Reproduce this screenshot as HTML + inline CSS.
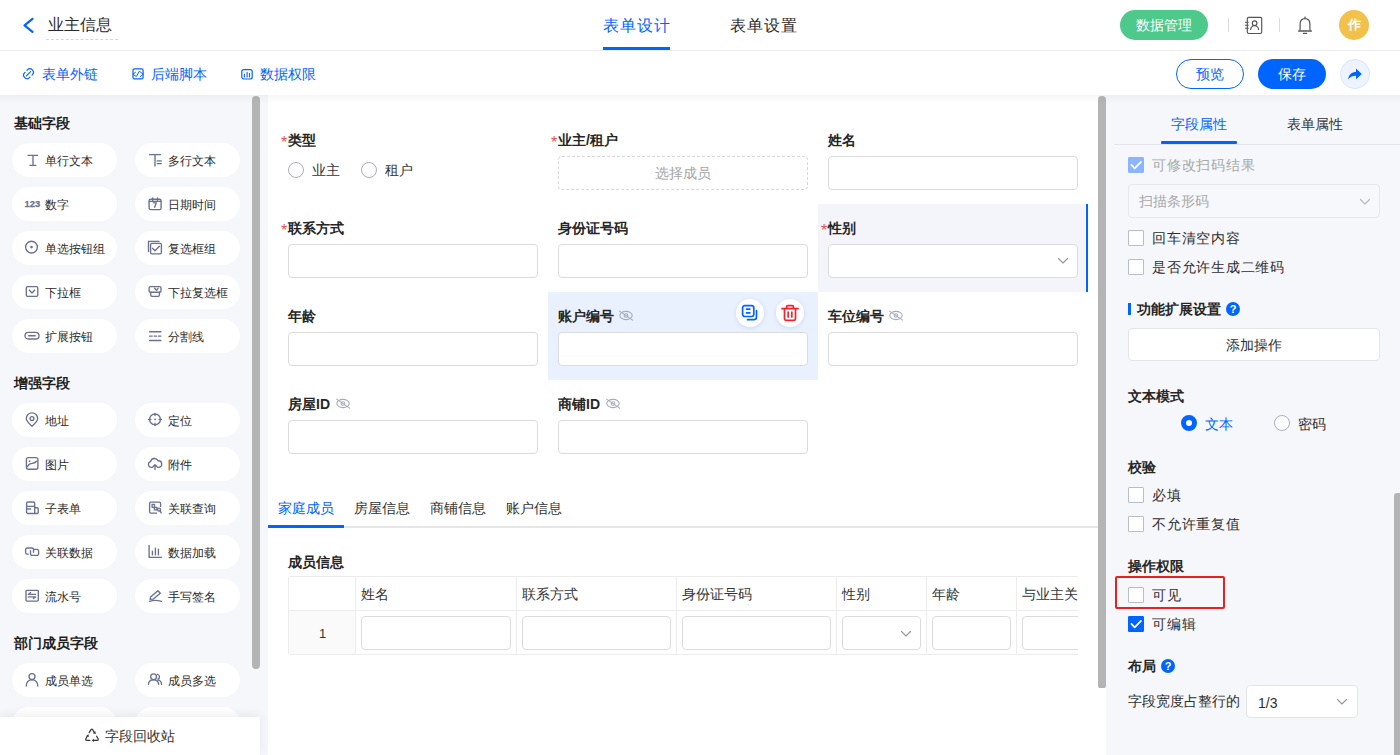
<!DOCTYPE html>
<html><head><meta charset="utf-8">
<style>
*{box-sizing:border-box;margin:0;padding:0}
html,body{width:1400px;height:755px;overflow:hidden}
body{position:relative;background:#f5f7fb;font-family:"Liberation Sans",sans-serif;color:#333;font-size:14px}
.a{position:absolute}
.t{position:absolute;white-space:nowrap;line-height:1}
svg{position:absolute;overflow:visible}
/* header */
#hdr{left:0;top:0;width:1400px;height:51px;background:#fff;border-bottom:1px solid #ececec}
#tb{left:0;top:51px;width:1400px;height:44px;background:#fff}
#tbsh{left:0;top:95px;width:1400px;height:9px;background:linear-gradient(rgba(0,0,0,0.035),rgba(0,0,0,0))}
.blue{color:#0064ff}
/* left panel */
#lp{left:0;top:95px;width:260px;height:660px}
.h{position:absolute;white-space:nowrap;left:14px;font-weight:bold;font-size:14px;color:#1f1f1f;line-height:1}
.pill{position:absolute;width:105px;height:34px;border-radius:17px;background:#fff}
.pill .t{left:33px;top:12px;font-size:12px;color:#2b2b2b}
.pill svg{left:12px;top:10px}
/* canvas */
#cv{left:268px;top:95px;width:830px;height:660px;background:#fff}
.lbl{position:absolute;font-weight:bold;font-size:14px;color:#262626;line-height:1}
.req{color:#ee4d4d;font-weight:normal;position:absolute;left:-7px;top:2px;font-size:16px}
.inp{position:absolute;width:250px;height:34px;border:1px solid #dcdcdc;border-radius:4px;background:#fff}
/* right panel */
#rp{left:1106px;top:95px;width:294px;height:660px}
.cb{position:absolute;width:16px;height:16px;border:1px solid #b8bccb;border-radius:1px;background:#fff}
.rt{position:absolute;white-space:nowrap;line-height:1;font-size:14px;color:#2e2e2e}
</style></head>
<body>

<!-- HEADER -->
<div id="hdr" class="a">
  <svg style="left:0;top:0" width="40" height="50"><polyline points="32.5,18.8 24.5,25.3 32.5,31.8" fill="none" stroke="#0064ff" stroke-width="2.2" stroke-linecap="round" stroke-linejoin="round"/></svg>
  <div class="t" style="left:48px;top:17px;font-size:16px;color:#2a2a2a">业主信息</div>
  <div class="a" style="left:46px;top:39px;width:72px;height:0;border-top:1px dashed #d6d6d6"></div>
  <div class="t blue" style="left:603px;top:18px;font-size:16px;letter-spacing:1px">表单设计</div>
  <div class="a" style="left:603px;top:47px;width:67px;height:3px;background:#0064ff"></div>
  <div class="t" style="left:730px;top:18px;font-size:16px;color:#2a2a2a;letter-spacing:1px">表单设置</div>
  <div class="a" style="left:1120px;top:10px;width:88px;height:30px;border-radius:15px;background:#4cc98b"></div>
  <div class="t" style="left:1136px;top:18px;font-size:14px;color:#fff">数据管理</div>
  <div class="a" style="left:1228px;top:18px;width:1px;height:14px;background:#dcdcdc"></div>
  <svg style="left:1244px;top:16px" width="20" height="20"><rect x="3.3" y="1.3" width="14.4" height="16.2" rx="1.4" fill="none" stroke="#555" stroke-width="1.15"/><circle cx="10.6" cy="7.2" r="2.3" fill="none" stroke="#555" stroke-width="1.15"/><path d="M6.6 14 A4 4.4 0 0 1 14.6 14" fill="none" stroke="#555" stroke-width="1.15"/><path d="M1 6.3h3.8M1 9.3h3.8M1 12.3h3.8" stroke="#555" stroke-width="1.1"/></svg>
  <div class="a" style="left:1279px;top:18px;width:1px;height:14px;background:#dcdcdc"></div>
  <svg style="left:1296px;top:15px" width="20" height="22"><path d="M3.8 15.6 Q4.1 14.8 4.1 13.5 V9.2 Q4.1 3.6 9 3.6 Q13.9 3.6 13.9 9.2 V13.5 Q13.9 14.8 14.2 15.6" fill="none" stroke="#555" stroke-width="1.2" stroke-linejoin="round"/><path d="M2.6 16 H15.4" stroke="#555" stroke-width="1.3" stroke-linecap="round"/><circle cx="9" cy="2.2" r="0.8" fill="#555"/><path d="M7.4 18.4 H10.6" stroke="#555" stroke-width="1.2" stroke-linecap="round"/></svg>
  <div class="a" style="left:1339px;top:10px;width:30px;height:30px;border-radius:15px;background:#f2c14b"></div>
  <div class="t" style="left:1348px;top:19px;font-size:12.5px;color:#fff;font-weight:bold">作</div>
</div>

<!-- TOOLBAR -->
<div id="tb" class="a">
  <svg style="left:22px;top:16px" width="14" height="14"><g transform="translate(6.5 6.75) rotate(45) scale(1.2)" fill="none" stroke="#0064ff" stroke-width="1" stroke-linecap="round"><path d="M-2.9 -1.2V-1.6A2.9 2.9 0 0 1 2.9 -1.6V-1.2M2.9 1.2V1.6A2.9 2.9 0 0 1 -2.9 1.6V1.2M0 -2.5V2.5"/></g></svg>
  <div class="t blue" style="left:42px;top:16px;font-size:14px">表单外链</div>
  <svg style="left:131px;top:17px" width="14" height="14"><rect x="2" y="0.8" width="10.1" height="10.1" rx="1.5" fill="none" stroke="#0064ff" stroke-width="1.2"/><path d="M4.5 4.3L1.8 6.2L5.4 8.5L8.3 3.2L12.3 6.2L9.3 8.5" fill="none" stroke="#0064ff" stroke-width="1" stroke-linejoin="round" stroke-linecap="round"/></svg>
  <div class="t blue" style="left:151px;top:16px;font-size:14px">后端脚本</div>
  <svg style="left:240px;top:17px" width="14" height="14"><rect x="1.8" y="1.7" width="10.4" height="9.3" rx="2" fill="none" stroke="#0064ff" stroke-width="1.2"/><path d="M4.4 6.2V8.9M7.1 4.3V8.9M9.5 5.3V8.9" stroke="#0064ff" stroke-width="1.1" stroke-linecap="round"/></svg>
  <div class="t blue" style="left:260px;top:16px;font-size:14px">数据权限</div>
  <div class="a" style="left:1176px;top:8px;width:68px;height:30px;border-radius:15px;border:1px solid #0064ff;background:#fff"></div>
  <div class="t blue" style="left:1196px;top:16px;font-size:14px">预览</div>
  <div class="a" style="left:1258px;top:8px;width:68px;height:30px;border-radius:15px;background:#0064ff"></div>
  <div class="t" style="left:1278px;top:16px;font-size:14px;color:#fff">保存</div>
  <div class="a" style="left:1340px;top:8px;width:30px;height:30px;border-radius:15px;background:#eef4ff;border:1px solid #d8e5ff"></div>
  <svg style="left:1347px;top:15px" width="16" height="16"><path d="M1.2 13.4 C1.8 8.4 5 6.1 9 6.1 V2.6 L14.8 8 L9 13.3 V9.7 C5.6 9.7 3.2 10.8 1.2 13.4 Z" fill="#0064ff"/></svg>
</div>

<!-- LEFT PANEL -->
<div class="a" style="left:0;top:0">
<div class="h" style="top:116px">基础字段</div>
<div class="pill" style="left:12px;top:143px"><svg width="20" height="20" style="left:10px;top:7px"><path d="M6.1 5.4H15.6M8 15.4H13.8M11 5.4V15.4" stroke="#69718f" stroke-width="1.35" fill="none" stroke-linecap="round" stroke-linejoin="round"/></svg><div class="t">单行文本</div></div>
<div class="pill" style="left:135px;top:143px"><svg width="20" height="20" style="left:10px;top:7px"><path d="M4.5 4.6H15.6M10 4.6V16M12.2 10.9H16.3M12.2 13.6H16.3" stroke="#69718f" stroke-width="1.35" fill="none" stroke-linecap="round" stroke-linejoin="round"/></svg><div class="t">多行文本</div></div>
<div class="pill" style="left:12px;top:187px"><svg width="20" height="20" style="left:10px;top:7px"><text x="2.6" y="13" style="font:bold 9.4px &quot;Liberation Sans&quot;" fill="#69718f" stroke="#69718f" stroke-width="0.25">123</text></svg><div class="t">数字</div></div>
<div class="pill" style="left:135px;top:187px"><svg width="20" height="20" style="left:10px;top:7px"><rect x="4.1" y="5.2" width="12" height="10.4" rx="1.6" stroke="#69718f" stroke-width="1.35" fill="none" stroke-linecap="round" stroke-linejoin="round"/><path d="M7.7 3.8V6.2M12.5 3.8V6.2M4.1 7.3H16.1M8.3 8.8H11.4L9.6 13.3" stroke="#69718f" stroke-width="1.35" fill="none" stroke-linecap="round" stroke-linejoin="round"/></svg><div class="t">日期时间</div></div>
<div class="pill" style="left:12px;top:231px"><svg width="20" height="20" style="left:10px;top:7px"><circle cx="9.5" cy="9.1" r="5.9" stroke="#69718f" stroke-width="1.35" fill="none" stroke-linecap="round" stroke-linejoin="round"/><circle cx="9.5" cy="9.1" r="1.3" fill="#69718f"/></svg><div class="t">单选按钮组</div></div>
<div class="pill" style="left:135px;top:231px"><svg width="20" height="20" style="left:10px;top:7px"><path d="M3.5 13.6V3.4H14" stroke="#69718f" stroke-width="1.35" fill="none" stroke-linecap="round" stroke-linejoin="round"/><rect x="5.6" y="5.4" width="10.8" height="10.4" rx="1.2" stroke="#69718f" stroke-width="1.35" fill="none" stroke-linecap="round" stroke-linejoin="round"/><path d="M7.5 10.3L10 12.8L14.4 8.2" stroke="#69718f" stroke-width="1.35" fill="none" stroke-linecap="round" stroke-linejoin="round"/></svg><div class="t">复选框组</div></div>
<div class="pill" style="left:12px;top:275px"><svg width="20" height="20" style="left:10px;top:7px"><rect x="4.3" y="4.6" width="11.5" height="9.7" rx="1.3" stroke="#69718f" stroke-width="1.35" fill="none" stroke-linecap="round" stroke-linejoin="round"/><path d="M7.4 8.3L10 10.9L12.6 8.3" stroke="#69718f" stroke-width="1.35" fill="none" stroke-linecap="round" stroke-linejoin="round"/></svg><div class="t">下拉框</div></div>
<div class="pill" style="left:135px;top:275px"><svg width="20" height="20" style="left:10px;top:7px"><rect x="4.1" y="4.6" width="11.9" height="5.6" rx="1.3" stroke="#69718f" stroke-width="1.35" fill="none" stroke-linecap="round" stroke-linejoin="round"/><path d="M5.7 10.2V13Q5.7 14.3 7 14.3H13.1Q14.4 14.3 14.4 13V10.2M9.6 6.3L11.6 8.3L13 6.3" stroke="#69718f" stroke-width="1.35" fill="none" stroke-linecap="round" stroke-linejoin="round"/></svg><div class="t">下拉复选框</div></div>
<div class="pill" style="left:12px;top:319px"><svg width="20" height="20" style="left:10px;top:7px"><rect x="3" y="6.4" width="14" height="6.6" rx="3.3" stroke="#69718f" stroke-width="1.35" fill="none" stroke-linecap="round" stroke-linejoin="round"/><path d="M6.7 9.7H13.3" stroke="#69718f" stroke-width="1.35" fill="none" stroke-linecap="round" stroke-linejoin="round"/></svg><div class="t">扩展按钮</div></div>
<div class="pill" style="left:135px;top:319px"><svg width="20" height="20" style="left:10px;top:7px"><path d="M4.6 5.7H15.9M4.6 14.5H15.9M4.6 10.1H7.2M9 10.1H11.5M13.3 10.1H15.9" stroke="#69718f" stroke-width="1.35" fill="none" stroke-linecap="round" stroke-linejoin="round"/></svg><div class="t">分割线</div></div>
<div class="h" style="top:376px">增强字段</div>
<div class="pill" style="left:12px;top:403px"><svg width="20" height="20" style="left:10px;top:7px"><path d="M10 16.2Q4.3 11.4 4.3 8.6A5.7 5.7 0 0 1 15.7 8.6Q15.7 11.4 10 16.2Z" stroke="#69718f" stroke-width="1.35" fill="none" stroke-linecap="round" stroke-linejoin="round"/><circle cx="10" cy="8.5" r="1.9" stroke="#69718f" stroke-width="1.35" fill="none" stroke-linecap="round" stroke-linejoin="round"/></svg><div class="t">地址</div></div>
<div class="pill" style="left:135px;top:403px"><svg width="20" height="20" style="left:10px;top:7px"><circle cx="10" cy="9.4" r="5.4" stroke="#69718f" stroke-width="1.35" fill="none" stroke-linecap="round" stroke-linejoin="round"/><path d="M10 3.3V5.6M10 13.2V15.6M3.6 9.4H5.9M14.1 9.4H16.4" stroke="#69718f" stroke-width="1.35" fill="none" stroke-linecap="round" stroke-linejoin="round"/><rect x="9.2" y="8.6" width="1.6" height="1.6" fill="#69718f"/></svg><div class="t">定位</div></div>
<div class="pill" style="left:12px;top:447px"><svg width="20" height="20" style="left:10px;top:7px"><rect x="4.4" y="3.6" width="11.5" height="11.6" rx="2" stroke="#69718f" stroke-width="1.35" fill="none" stroke-linecap="round" stroke-linejoin="round"/><path d="M5.6 12.6Q6.8 9.6 10 9.4Q13 9.1 14.6 7.2" stroke="#69718f" stroke-width="1.35" fill="none" stroke-linecap="round" stroke-linejoin="round"/><circle cx="7.6" cy="7.2" r="0.9" fill="#69718f"/></svg><div class="t">图片</div></div>
<div class="pill" style="left:135px;top:447px"><svg width="20" height="20" style="left:10px;top:7px"><path d="M7.6 13.3H6.2A2.9 2.9 0 0 1 5.6 7.6A3.9 3.9 0 0 1 13 6.8A3.2 3.2 0 0 1 13.8 13.3H12.4M10 15.6V11M8.1 12.6L10 10.7L11.9 12.6" stroke="#69718f" stroke-width="1.35" fill="none" stroke-linecap="round" stroke-linejoin="round"/></svg><div class="t">附件</div></div>
<div class="pill" style="left:12px;top:491px"><svg width="20" height="20" style="left:10px;top:7px"><path d="M12.7 15.5H6A1.4 1.4 0 0 1 4.6 14.1V5.4A1.4 1.4 0 0 1 6 4H11.3A1.4 1.4 0 0 1 12.7 5.4V15.5ZM4.6 8.3H12.7M5.8 11H8.6M12.7 9.7H15.2A1 1 0 0 1 16.2 10.7V14.5A1 1 0 0 1 15.2 15.5H12.7" stroke="#69718f" stroke-width="1.35" fill="none" stroke-linecap="round" stroke-linejoin="round"/></svg><div class="t">子表单</div></div>
<div class="pill" style="left:135px;top:491px"><svg width="20" height="20" style="left:10px;top:7px"><path d="M11.6 15.1H5.9A1.3 1.3 0 0 1 4.6 13.8V5.4A1.3 1.3 0 0 1 5.9 4.1H14.3A1.3 1.3 0 0 1 15.6 5.4V8.6" stroke="#69718f" stroke-width="1.35" fill="none" stroke-linecap="round" stroke-linejoin="round"/><rect x="7.1" y="6.3" width="2.4" height="3" stroke="#69718f" stroke-width="1.35" fill="none" stroke-linecap="round" stroke-linejoin="round"/><rect x="9.4" y="9.3" width="2.4" height="2.6" stroke="#69718f" stroke-width="1.35" fill="none" stroke-linecap="round" stroke-linejoin="round"/><circle cx="14" cy="11.6" r="1.5" stroke="#69718f" stroke-width="1.35" fill="none" stroke-linecap="round" stroke-linejoin="round"/><path d="M15.2 12.9L16.2 14.9" stroke="#69718f" stroke-width="1.35" fill="none" stroke-linecap="round" stroke-linejoin="round"/></svg><div class="t">关联查询</div></div>
<div class="pill" style="left:12px;top:535px"><svg width="20" height="20" style="left:10px;top:7px"><path d="M6.3 12.1H5.2A1.6 1.6 0 0 1 3.6 10.5V7.6A1.6 1.6 0 0 1 5.2 6H9.9A1.6 1.6 0 0 1 11.5 7.6V10.3M11.7 7.4H15A1.6 1.6 0 0 1 16.6 9V11.8A1.6 1.6 0 0 1 15 13.4H10.1A1.6 1.6 0 0 1 8.5 11.8V8.6" stroke="#69718f" stroke-width="1.35" fill="none" stroke-linecap="round" stroke-linejoin="round"/></svg><div class="t">关联数据</div></div>
<div class="pill" style="left:135px;top:535px"><svg width="20" height="20" style="left:10px;top:7px"><path d="M4.1 3.4V15.3H16.6M7.4 9.1V12.9M10.4 6.2V12.9M13.4 7.1V12.9" stroke="#69718f" stroke-width="1.35" fill="none" stroke-linecap="round" stroke-linejoin="round"/></svg><div class="t">数据加载</div></div>
<div class="pill" style="left:12px;top:579px"><svg width="20" height="20" style="left:10px;top:7px"><rect x="4" y="4.3" width="12.3" height="10.8" rx="0.8" stroke="#69718f" stroke-width="1.35" fill="none" stroke-linecap="round" stroke-linejoin="round"/><path d="M6.3 8.4H13.5M6.3 8.4L8.6 6.5M6.3 10.9H13.5M13.5 10.9L11.4 12.5" stroke="#69718f" stroke-width="1.35" fill="none" stroke-linecap="round" stroke-linejoin="round"/></svg><div class="t">流水号</div></div>
<div class="pill" style="left:135px;top:579px"><svg width="20" height="20" style="left:10px;top:7px"><path d="M5.2 13.4L5.6 10.9L12.9 4.7L15.3 7.3L8 13.2Z" stroke="#69718f" stroke-width="1.35" fill="none" stroke-linecap="round" stroke-linejoin="round"/><path d="M4.5 15.3Q10 13.4 16.4 15.3" stroke="#69718f" stroke-width="1.35" fill="none" stroke-linecap="round" stroke-linejoin="round"/></svg><div class="t">手写签名</div></div>
<div class="h" style="top:636px">部门成员字段</div>
<div class="pill" style="left:12px;top:663px"><svg width="20" height="20" style="left:10px;top:7px"><circle cx="10" cy="6.6" r="3" stroke="#69718f" stroke-width="1.35" fill="none" stroke-linecap="round" stroke-linejoin="round"/><path d="M4.3 16Q4.4 9.8 10 9.8Q15.6 9.8 15.8 16" stroke="#69718f" stroke-width="1.35" fill="none" stroke-linecap="round" stroke-linejoin="round"/></svg><div class="t">成员单选</div></div>
<div class="pill" style="left:135px;top:663px"><svg width="20" height="20" style="left:10px;top:7px"><circle cx="8.6" cy="6.8" r="2.9" stroke="#69718f" stroke-width="1.35" fill="none" stroke-linecap="round" stroke-linejoin="round"/><path d="M3.4 14.4Q3.6 9.8 8.6 9.8Q13.3 9.8 13.7 14.4M12.4 4.3A2.6 2.6 0 0 1 13 9.2M13 9.8Q16.3 10.6 16.6 14.4" stroke="#69718f" stroke-width="1.35" fill="none" stroke-linecap="round" stroke-linejoin="round"/></svg><div class="t">成员多选</div></div>
<div class="pill" style="left:12px;top:707px"><svg width="20" height="20" style="left:10px;top:7px"><circle cx="10" cy="6.6" r="3" stroke="#69718f" stroke-width="1.35" fill="none" stroke-linecap="round" stroke-linejoin="round"/><path d="M4.3 16Q4.4 9.8 10 9.8Q15.6 9.8 15.8 16" stroke="#69718f" stroke-width="1.35" fill="none" stroke-linecap="round" stroke-linejoin="round"/></svg><div class="t">部门单选</div></div>
<div class="pill" style="left:135px;top:707px"><svg width="20" height="20" style="left:10px;top:7px"><circle cx="8.6" cy="6.8" r="2.9" stroke="#69718f" stroke-width="1.35" fill="none" stroke-linecap="round" stroke-linejoin="round"/><path d="M3.4 14.4Q3.6 9.8 8.6 9.8Q13.3 9.8 13.7 14.4M12.4 4.3A2.6 2.6 0 0 1 13 9.2M13 9.8Q16.3 10.6 16.6 14.4" stroke="#69718f" stroke-width="1.35" fill="none" stroke-linecap="round" stroke-linejoin="round"/></svg><div class="t">部门多选</div></div>
</div>
<div class="a" style="left:252px;top:96px;width:8px;height:573px;border-radius:4px;background:#b4b4b4"></div>
<div class="a" style="left:0;top:717px;width:260px;height:38px;background:#fff;box-shadow:0 -2px 10px rgba(0,0,0,0.07)"></div>
<svg style="left:84px;top:727px" width="16" height="16"><path d="M5.2 5.6L7 2.6Q7.8 1.6 8.6 2.6L10 5M3.4 8.8L1.8 12Q1.3 13.3 2.8 13.3H5.9M12.6 9.2L14.2 12Q14.7 13.3 13.2 13.3H9" fill="none" stroke="#333" stroke-width="1.2" stroke-linecap="round" stroke-linejoin="round"/><path d="M8.8 6.2L11.9 6.9L11.2 3.9Z M2.2 9.3L4.8 9.9L4.5 6.9Z M8 13.3L10 11.7V14.9Z" fill="#333"/></svg>
<div class="t" style="left:105px;top:729px;font-size:14px;color:#333">字段回收站</div>


<!-- CANVAS -->
<div id="cv" class="a"></div>
<div class="a" style="left:818px;top:204px;width:267px;height:88px;background:#f3f5fa"></div>
<div class="a" style="left:1086px;top:204px;width:2px;height:88px;background:#0064ff"></div>
<div class="a" style="left:548px;top:292px;width:270px;height:88px;background:#e9f1fe"></div>
<div class="lbl" style="left:288px;top:133px"><span class="req">*</span>类型</div>
<div class="a" style="left:288px;top:162px;width:16px;height:16px;border-radius:8px;border:1px solid #a9aec0;background:#fff"></div>
<div class="t" style="left:312px;top:163px;font-size:14px;color:#333">业主</div>
<div class="a" style="left:361px;top:162px;width:16px;height:16px;border-radius:8px;border:1px solid #a9aec0;background:#fff"></div>
<div class="t" style="left:385px;top:163px;font-size:14px;color:#333">租户</div>
<div class="lbl" style="left:558px;top:133px"><span class="req">*</span>业主/租户</div>
<div class="a" style="left:558px;top:156px;width:250px;height:34px;border:1px dashed #d9d9d9;border-radius:4px;background:#fff"></div>
<div class="t" style="left:655px;top:166px;font-size:14px;color:#a6a6a6">选择成员</div>
<div class="lbl" style="left:828px;top:133px">姓名</div>
<div class="inp" style="left:828px;top:156px"></div>
<div class="lbl" style="left:288px;top:221px"><span class="req">*</span>联系方式</div>
<div class="inp" style="left:288px;top:244px"></div>
<div class="lbl" style="left:558px;top:221px">身份证号码</div>
<div class="inp" style="left:558px;top:244px"></div>
<div class="lbl" style="left:828px;top:221px"><span class="req">*</span>性别</div>
<div class="inp" style="left:828px;top:244px"></div>
<svg style="left:1057px;top:257px" width="12" height="8"><path d="M1.5 1.5L6 6L10.5 1.5" fill="none" stroke="#999" stroke-width="1.15" stroke-linecap="round" stroke-linejoin="round"/></svg>
<div class="lbl" style="left:288px;top:309px">年龄</div>
<div class="inp" style="left:288px;top:332px"></div>
<div class="lbl" style="left:558px;top:309px">账户编号</div>
<svg style="left:618px;top:310px" width="16" height="12"><ellipse cx="8" cy="5.5" rx="6.2" ry="4.1" fill="none" stroke="#a3abbd" stroke-width="1.1"/><circle cx="8" cy="5.5" r="1.8" fill="none" stroke="#a3abbd" stroke-width="1.1"/><path d="M1.6 1.1L14.6 10.1" stroke="#a3abbd" stroke-width="1.1" stroke-linecap="round"/></svg>
<div class="inp" style="left:558px;top:332px"></div>
<div class="lbl" style="left:828px;top:309px">车位编号</div>
<svg style="left:888px;top:310px" width="16" height="12"><ellipse cx="8" cy="5.5" rx="6.2" ry="4.1" fill="none" stroke="#a3abbd" stroke-width="1.1"/><circle cx="8" cy="5.5" r="1.8" fill="none" stroke="#a3abbd" stroke-width="1.1"/><path d="M1.6 1.1L14.6 10.1" stroke="#a3abbd" stroke-width="1.1" stroke-linecap="round"/></svg>
<div class="inp" style="left:828px;top:332px"></div>
<div class="lbl" style="left:288px;top:397px">房屋ID</div>
<svg style="left:335px;top:398px" width="16" height="12"><ellipse cx="8" cy="5.5" rx="6.2" ry="4.1" fill="none" stroke="#a3abbd" stroke-width="1.1"/><circle cx="8" cy="5.5" r="1.8" fill="none" stroke="#a3abbd" stroke-width="1.1"/><path d="M1.6 1.1L14.6 10.1" stroke="#a3abbd" stroke-width="1.1" stroke-linecap="round"/></svg>
<div class="inp" style="left:288px;top:420px"></div>
<div class="lbl" style="left:558px;top:397px">商铺ID</div>
<svg style="left:605px;top:398px" width="16" height="12"><ellipse cx="8" cy="5.5" rx="6.2" ry="4.1" fill="none" stroke="#a3abbd" stroke-width="1.1"/><circle cx="8" cy="5.5" r="1.8" fill="none" stroke="#a3abbd" stroke-width="1.1"/><path d="M1.6 1.1L14.6 10.1" stroke="#a3abbd" stroke-width="1.1" stroke-linecap="round"/></svg>
<div class="inp" style="left:558px;top:420px"></div>
<div class="a" style="left:736px;top:299px;width:28px;height:28px;border-radius:14px;background:#fff;box-shadow:0 1px 4px rgba(30,90,200,0.15)"></div>
<div class="a" style="left:776px;top:299px;width:28px;height:28px;border-radius:14px;background:#fff;box-shadow:0 1px 4px rgba(30,90,200,0.15)"></div>
<svg style="left:740px;top:303px" width="20" height="20"><rect x="2.6" y="2.7" width="11.2" height="10.8" rx="2.2" fill="none" stroke="#0064ff" stroke-width="1.7"/><path d="M6.5 6.1H9.8M6.5 9.9H9.8M16.5 7.5V14Q16.5 16.7 13.8 16.7H7.5" fill="none" stroke="#0064ff" stroke-width="1.7" stroke-linecap="round"/></svg>
<svg style="left:780px;top:303px" width="20" height="20"><path d="M2 5.6H18M6.5 5.6V4Q6.5 2.6 7.9 2.6H12.1Q13.5 2.6 13.5 4V5.6M4.5 5.6V15.8Q4.5 17.4 6.1 17.4H13.9Q15.5 17.4 15.5 15.8V5.6M8.2 9V14M11.8 9V14" fill="none" stroke="#f5222d" stroke-width="1.7" stroke-linecap="round"/></svg>
<div class="a" style="left:268px;top:526px;width:830px;height:2px;background:#e6e6e6"></div>
<div class="a" style="left:268px;top:525px;width:76px;height:3px;background:#0064ff"></div>
<div class="t" style="left:278px;top:501px;font-size:14px;color:#0064ff">家庭成员</div>
<div class="t" style="left:354px;top:501px;font-size:14px;color:#333">房屋信息</div>
<div class="t" style="left:430px;top:501px;font-size:14px;color:#333">商铺信息</div>
<div class="t" style="left:506px;top:501px;font-size:14px;color:#333">账户信息</div>
<div class="lbl" style="left:288px;top:555px">成员信息</div>
<div class="a" style="left:288px;top:576px;width:790px;height:79px;overflow:hidden;border-radius:3px 0 0 3px">
<div class="a" style="left:0px;top:0;width:68px;height:35px;border:1px solid #ececec;border-left:1px solid #ececec;background:#fff"></div>
<div class="a" style="left:0px;top:34px;width:68px;height:45px;border:1px solid #ececec;border-left:1px solid #ececec;background:#fafafa"></div>
<div class="a" style="left:68px;top:0;width:161px;height:35px;border:1px solid #ececec;border-left:0;background:#fff"></div>
<div class="a" style="left:68px;top:34px;width:161px;height:45px;border:1px solid #ececec;border-left:0;background:#fff"></div>
<div class="t" style="left:73px;top:11px;font-size:14px;color:#333">姓名</div>
<div class="inp" style="left:73px;top:40px;width:150px;height:34px"></div>
<div class="a" style="left:229px;top:0;width:160px;height:35px;border:1px solid #ececec;border-left:0;background:#fff"></div>
<div class="a" style="left:229px;top:34px;width:160px;height:45px;border:1px solid #ececec;border-left:0;background:#fff"></div>
<div class="t" style="left:234px;top:11px;font-size:14px;color:#333">联系方式</div>
<div class="inp" style="left:234px;top:40px;width:149px;height:34px"></div>
<div class="a" style="left:389px;top:0;width:160px;height:35px;border:1px solid #ececec;border-left:0;background:#fff"></div>
<div class="a" style="left:389px;top:34px;width:160px;height:45px;border:1px solid #ececec;border-left:0;background:#fff"></div>
<div class="t" style="left:394px;top:11px;font-size:14px;color:#333">身份证号码</div>
<div class="inp" style="left:394px;top:40px;width:149px;height:34px"></div>
<div class="a" style="left:549px;top:0;width:90px;height:35px;border:1px solid #ececec;border-left:0;background:#fff"></div>
<div class="a" style="left:549px;top:34px;width:90px;height:45px;border:1px solid #ececec;border-left:0;background:#fff"></div>
<div class="t" style="left:554px;top:11px;font-size:14px;color:#333">性别</div>
<div class="inp" style="left:554px;top:40px;width:79px;height:34px"></div>
<svg style="left:612px;top:54px" width="12" height="8"><path d="M1.5 1.5L6 6L10.5 1.5" fill="none" stroke="#999" stroke-width="1.15" stroke-linecap="round" stroke-linejoin="round"/></svg>
<div class="a" style="left:639px;top:0;width:90px;height:35px;border:1px solid #ececec;border-left:0;background:#fff"></div>
<div class="a" style="left:639px;top:34px;width:90px;height:45px;border:1px solid #ececec;border-left:0;background:#fff"></div>
<div class="t" style="left:644px;top:11px;font-size:14px;color:#333">年龄</div>
<div class="inp" style="left:644px;top:40px;width:79px;height:34px"></div>
<div class="a" style="left:729px;top:0;width:163px;height:35px;border:1px solid #ececec;border-left:0;background:#fff"></div>
<div class="a" style="left:729px;top:34px;width:163px;height:45px;border:1px solid #ececec;border-left:0;background:#fff"></div>
<div class="t" style="left:734px;top:11px;font-size:14px;color:#333">与业主关系</div>
<div class="inp" style="left:734px;top:40px;width:152px;height:34px"></div>
<div class="t" style="left:31px;top:51px;font-size:13px;color:#333">1</div>
</div>
<div class="a" style="left:1098px;top:96px;width:8px;height:593px;border-radius:4px;background:#b4b4b4"></div>
<div class="a" style="left:1098px;top:688px;width:8px;height:67px;background:#fff"></div>

<!-- RIGHT PANEL -->
<div id="rp" class="a"></div>
<div class="a" style="left:1114px;top:144px;width:286px;height:1px;background:#e3e5ea"></div>
<div class="t blue" style="left:1171px;top:117px;font-size:14px">字段属性</div>
<div class="a" style="left:1161px;top:141px;width:76px;height:3px;background:#0064ff;border-radius:1px"></div>
<div class="t" style="left:1287px;top:117px;font-size:14px;color:#333">表单属性</div>
<div class="cb" style="left:1128px;top:157px;background:#8db4ff;border-color:#8db4ff"><svg style="left:2px;top:3px" width="12" height="10"><path d="M0.4 3.9L3.7 7.3L10 0.8" fill="none" stroke="#fff" stroke-width="1.7" stroke-linecap="round" stroke-linejoin="round"/></svg></div>
<div class="rt" style="left:1152px;top:158px;color:#a8a8a8;letter-spacing:0.75px">可修改扫码结果</div>
<div class="a" style="left:1128px;top:184px;width:252px;height:34px;border:1px solid #e6e8ec;border-radius:4px;background:#f7f8fb"></div>
<div class="rt" style="left:1139px;top:194px;color:#a8a8a8">扫描条形码</div>
<svg style="left:1359px;top:198px" width="12" height="8"><path d="M1.5 1.5L6 6L10.5 1.5" fill="none" stroke="#b8b8b8" stroke-width="1.2" stroke-linecap="round" stroke-linejoin="round"/></svg>
<div class="cb" style="left:1128px;top:230px"></div>
<div class="rt" style="left:1152px;top:231px;color:#2e2e2e;letter-spacing:0.75px">回车清空内容</div>
<div class="cb" style="left:1128px;top:259px"></div>
<div class="rt" style="left:1152px;top:260px;color:#2e2e2e;letter-spacing:0.75px">是否允许生成二维码</div>
<div class="a" style="left:1128px;top:303px;width:3px;height:12px;background:#0064ff"></div>
<div class="lbl" style="left:1137px;top:302px">功能扩展设置</div>
<div class="a" style="left:1226px;top:302px;width:14px;height:14px;border-radius:7px;background:#0064ff;color:#fff;font:bold 11px/14px 'Liberation Sans',sans-serif;text-align:center">?</div>
<div class="a" style="left:1128px;top:328px;width:252px;height:33px;border:1px solid #e3e5ea;border-radius:4px;background:#fff"></div>
<div class="rt" style="left:1226px;top:338px">添加操作</div>
<div class="lbl" style="left:1128px;top:389px">文本模式</div>
<div class="a" style="left:1181px;top:415px;width:16px;height:16px;border-radius:8px;border:5px solid #0064ff;background:#fff"></div>
<div class="rt" style="left:1205px;top:417px;color:#0064ff">文本</div>
<div class="a" style="left:1274px;top:415px;width:16px;height:16px;border-radius:8px;border:1px solid #a9aec0;background:#fff"></div>
<div class="rt" style="left:1298px;top:417px">密码</div>
<div class="lbl" style="left:1128px;top:460px">校验</div>
<div class="cb" style="left:1128px;top:487px"></div>
<div class="rt" style="left:1152px;top:488px;color:#2e2e2e;letter-spacing:0.75px">必填</div>
<div class="cb" style="left:1128px;top:516px"></div>
<div class="rt" style="left:1152px;top:517px;color:#2e2e2e;letter-spacing:0.75px">不允许重复值</div>
<div class="lbl" style="left:1128px;top:559px">操作权限</div>
<div class="a" style="left:1115px;top:576px;width:110px;height:33px;border:2px solid #e8201e;border-radius:2px"></div>
<div class="cb" style="left:1128px;top:587px"></div>
<div class="rt" style="left:1152px;top:588px;color:#2e2e2e;letter-spacing:0.75px">可见</div>
<div class="cb" style="left:1128px;top:616px;background:#0064ff;border-color:#0064ff"><svg style="left:2px;top:3px" width="12" height="10"><path d="M0.4 3.9L3.7 7.3L10 0.8" fill="none" stroke="#fff" stroke-width="1.7" stroke-linecap="round" stroke-linejoin="round"/></svg></div>
<div class="rt" style="left:1152px;top:617px;color:#2e2e2e;letter-spacing:0.75px">可编辑</div>
<div class="lbl" style="left:1128px;top:659px">布局</div>
<div class="a" style="left:1161px;top:659px;width:14px;height:14px;border-radius:7px;background:#0064ff;color:#fff;font:bold 11px/14px 'Liberation Sans',sans-serif;text-align:center">?</div>
<div class="rt" style="left:1128px;top:694px">字段宽度占整行的</div>
<div class="a" style="left:1246px;top:685px;width:112px;height:33px;border:1px solid #e3e5ea;border-radius:4px;background:#fff"></div>
<div class="rt" style="left:1258px;top:696px">1/3</div>
<svg style="left:1336px;top:698px" width="12" height="8"><path d="M1.5 1.5L6 6L10.5 1.5" fill="none" stroke="#999" stroke-width="1.15" stroke-linecap="round" stroke-linejoin="round"/></svg>
<div class="a" style="left:1394px;top:493px;width:6px;height:262px;border-radius:3px 0 0 0;background:#b4b4b4"></div>

<div id="tbsh" class="a"></div>
</body></html>
